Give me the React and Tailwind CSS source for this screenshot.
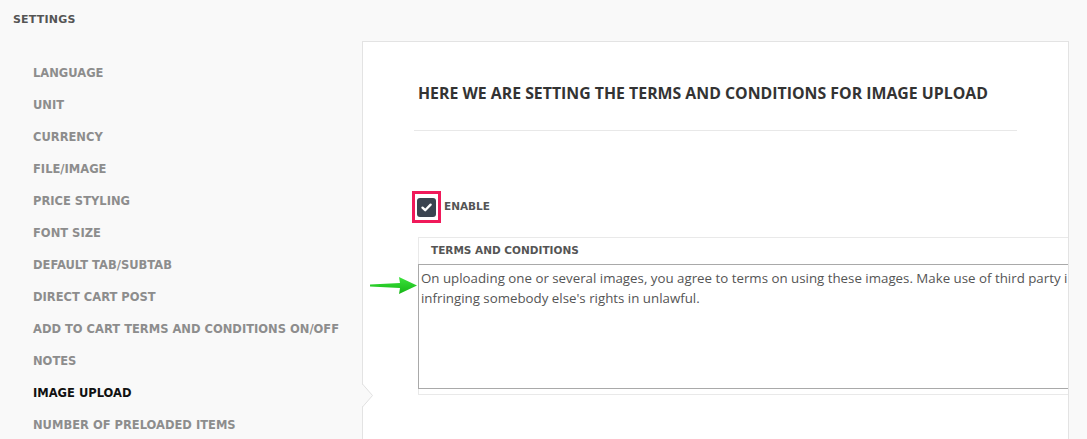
import React from "react";

const items = [
  "LANGUAGE",
  "UNIT",
  "CURRENCY",
  "FILE/IMAGE",
  "PRICE STYLING",
  "FONT SIZE",
  "DEFAULT TAB/SUBTAB",
  "DIRECT CART POST",
  "ADD TO CART TERMS AND CONDITIONS ON/OFF",
  "NOTES",
  "IMAGE UPLOAD",
  "NUMBER OF PRELOADED ITEMS",
];

const nav = { fontFamily: '"DejaVu Sans", sans-serif' };
const body = { fontFamily: '"Open Sans", sans-serif' };

export default function App() {
  return (
    <div className="relative h-[439px] w-[1087px] overflow-hidden bg-[#f9f9f9]">
      <div
        className="flex h-[41px] items-center pl-[13px] text-[11px] font-bold tracking-[0.2px] text-[#555]"
        style={nav}
      >
        SETTINGS
      </div>
      <div className="flex h-[398px]">
        <div className="w-[362px] shrink-0 pt-[17px]" style={nav}>
          {items.map((it) => (
            <div
              key={it}
              className={
                "flex h-[32px] items-center pl-[33px] text-[11.5px] font-bold " +
                (it === "IMAGE UPLOAD" ? "text-[#111]" : "text-[#8d8d8d]")
              }
            >
              {it}
            </div>
          ))}
        </div>
        <div className="relative mr-[18px] min-w-0 flex-1 border border-b-0 border-[#e3e3e3] bg-white">
          <div className="h-full overflow-hidden pl-[51px] pt-[40px]">
            <div
              className="h-[22px] whitespace-nowrap pl-[4px] text-[15.85px] font-bold leading-[22px] text-[#333]"
              style={body}
            >
              HERE WE ARE SETTING THE TERMS AND CONDITIONS FOR IMAGE UPLOAD
            </div>
            <div className="mt-[26px] h-px w-[603px] bg-[#e8e8e8]" />
            <div className="mt-[60px] flex items-center">
              <div className="ml-[-2px] flex h-[32px] w-[29px] items-center justify-center border-[3px] border-[#f0195a]">
                <div className="flex h-[19px] w-[19px] items-center justify-center rounded-[3px] bg-[#3b4450]">
                  <svg width="11" height="9" viewBox="0 0 11 9">
                    <path
                      d="M1.5 4.6 L4.2 7.2 L9.6 1.6"
                      fill="none"
                      stroke="#fff"
                      strokeWidth="2.3"
                      strokeLinecap="round"
                      strokeLinejoin="round"
                    />
                  </svg>
                </div>
              </div>
              <span
                className="ml-[3px] text-[10.5px] font-bold text-[#555]"
                style={nav}
              >
                ENABLE
              </span>
            </div>
            <div className="ml-[4px] mt-[14px] w-[700px] border border-r-0 border-[#e9e9e9] pb-[5px]">
              <div
                className="flex h-[26px] items-center pl-[12px] text-[10.5px] font-bold text-[#555]"
                style={nav}
              >
                TERMS AND CONDITIONS
              </div>
              <div
                className="ml-[-1px] h-[125px] whitespace-nowrap border border-[#a9a9a9] px-[2px] pt-[3px] text-[13.3px] leading-[20px] text-[#555]"
                style={body}
              >
                <div>
                  On uploading one or several images, you agree to terms on using these images. Make use of third party images
                </div>
                <div>infringing somebody else's rights in unlawful.</div>
              </div>
            </div>
          </div>
          <svg
            className="absolute left-[-1px] top-[342px]"
            width="12"
            height="23"
            viewBox="0 0 12 23"
          >
            <polygon points="0,0 10.5,11.5 0,23" fill="#f9f9f9" />
            <polyline
              points="0.5,0 10.5,11.5 0.5,23"
              fill="none"
              stroke="#e0e0e0"
              strokeWidth="1"
            />
          </svg>
        </div>
      </div>
      <svg
        className="absolute left-[369px] top-[276px]"
        width="50"
        height="20"
        viewBox="0 0 50 20"
      >
        <defs>
          <linearGradient id="ga" x1="0" y1="0" x2="0" y2="1">
            <stop offset="0" stopColor="#3be33b" />
            <stop offset="1" stopColor="#16b516" />
          </linearGradient>
        </defs>
        <path
          d="M1 8.6 L31 7 L30 1 L48 9.5 L30 18 L31 12 L1 10.6 Z"
          fill="url(#ga)"
        />
      </svg>
    </div>
  );
}
